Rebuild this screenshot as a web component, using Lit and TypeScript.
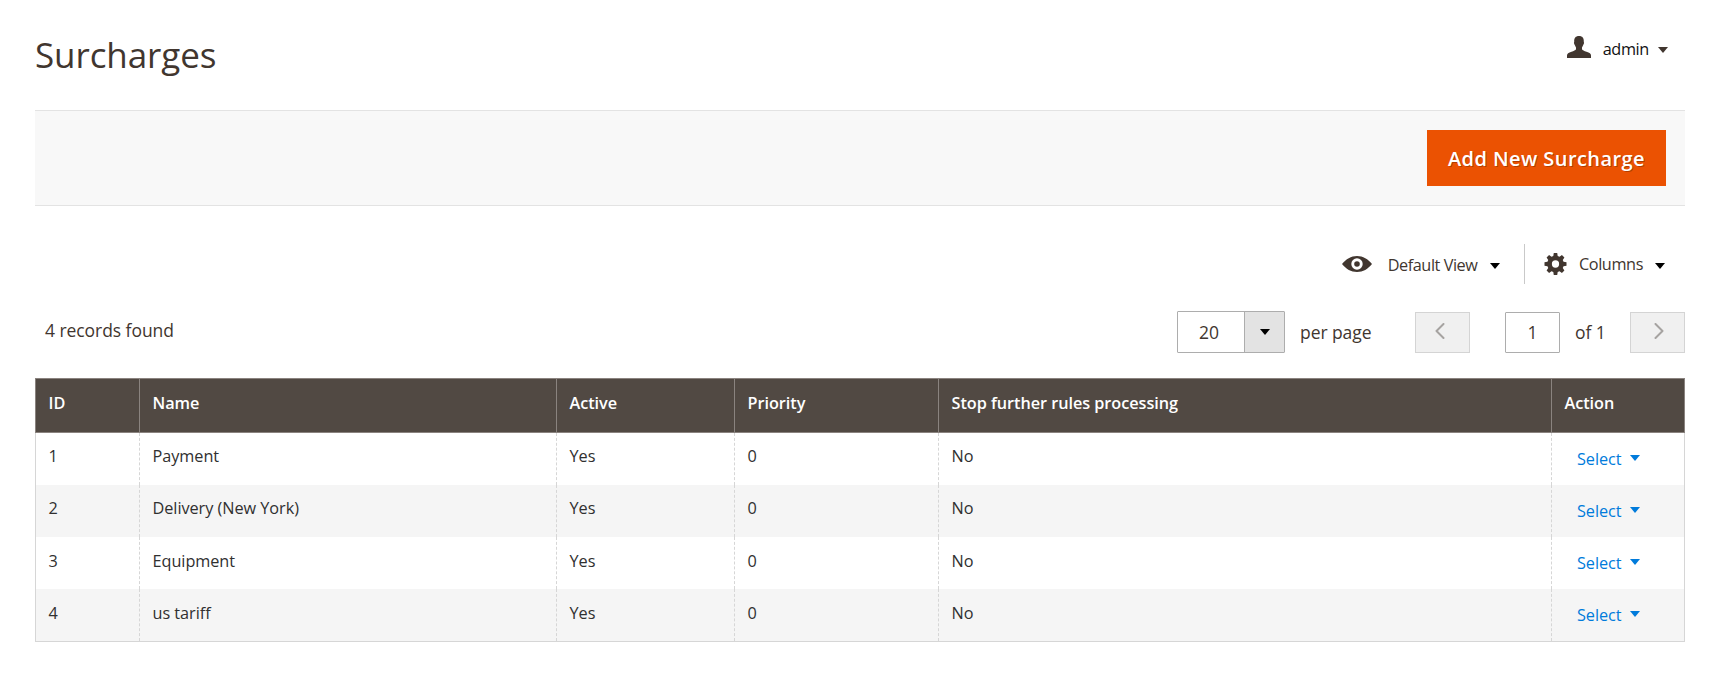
import { LitElement, html, css, svg } from "lit";
import { customElement, property, state } from "lit/decorators.js";

interface Surcharge {
  id: number;
  name: string;
  active: string;
  priority: number;
  stop: string;
}

const userIcon = svg`<path d="M12 0C8.6 0 7 2.200 7.200 5.400C7.300 6.100 6.900 6.100 7 7C7.100 8.100 7.600 8.500 7.900 9.300C8.200 10.300 8.800 11 9 11.600V13.200C8.500 14.300 6.800 14.900 4.500 15.700C1.500 16.700 0 17.300 0 19.500V22H24V19.500C24 17.300 22.500 16.700 19.500 15.700C17.200 14.900 15.500 14.300 15 13.200V11.600C15.200 11 15.800 10.300 16.100 9.300C16.400 8.500 16.900 8.100 17 7C17.100 6.100 16.700 6.100 16.800 5.400C17 2.200 15.400 0 12 0Z"/>`;
const eyeIcon = svg`<path fill-rule="evenodd" d="M0 8C4 3 9 0 15 0S26 3 30 8C26 13 21 16 15 16S4 13 0 8ZM15 2.300A5.700 5.700 0 1 0 15 13.700A5.700 5.700 0 1 0 15 2.300ZM15 5.200A2.800 2.800 0 1 1 15 10.800A2.800 2.800 0 1 1 15 5.200Z"/>`;
const gearIcon = svg`<path fill-rule="evenodd" d="M9.700 0H13.300L13.800 3.100L15.700 3.900L18.200 2.100L20.800 4.700L19.100 7.200L19.900 9.100L23 9.700V13.300L19.900 13.900L19.100 15.800L20.800 18.300L18.200 20.900L15.700 19.100L13.800 19.900L13.300 23H9.700L9.200 19.900L7.300 19.100L4.800 20.900L2.200 18.300L3.900 15.800L3.100 13.900L0 13.300V9.700L3.100 9.100L3.900 7.200L2.200 4.700L4.800 2.100L7.300 3.900L9.200 3.100ZM11.500 7.700A3.800 3.800 0 1 0 11.500 15.300A3.800 3.800 0 1 0 11.500 7.700Z"/>`;

@customElement("caret-down")
class CaretDown extends LitElement {
  static styles = css`
    :host { display: block; width: 10px; height: 6px; flex: none; }
    .shape { display: block; fill: currentColor; }
  `;
  render() {
    return html`<svg class="shape" width="10" height="6" viewBox="0 0 10 6"><path d="M0 0H10L5 6Z" /></svg>`;
  }
}

@customElement("page-header")
class PageHeader extends LitElement {
  @property() heading = "";
  @property() user = "";
  static styles = css`
    :host { display: flex; justify-content: space-between; height: 110px; }
    .title { margin: 31px 0 0; font-size: 35px; font-weight: 400; line-height: 48px; letter-spacing: -0.1px; color: #41362f; }
    .account { display: flex; height: 24px; margin: 36px 17px 0 0; color: #41362f; }
    .icon { display: block; fill: #41362f; margin-right: 11.5px; }
    .name { font-size: 16.25px; line-height: 26px; letter-spacing: -0.35px; color: #111; margin-right: 9px; }
    .caret { margin-top: 11px; }
  `;
  render() {
    return html`
      <h1 class="title">${this.heading}</h1>
      <div class="account">
        <svg class="icon" width="24" height="22" viewBox="0 0 24 22">${userIcon}</svg>
        <span class="name">${this.user}</span>
        <caret-down class="caret"></caret-down>
      </div>
    `;
  }
}

@customElement("grid-toolbar")
class GridToolbar extends LitElement {
  @property({ type: Number }) total = 0;
  static styles = css`
    :host { display: block; }
    .views { display: flex; justify-content: flex-end; height: 40px; padding: 38px 20px 0 0; color: #41362f; font-size: 16.25px; }
    .view { display: flex; height: 40px; padding-right: 24px; border-right: 1px solid #c9c9c9; }
    .columns { display: flex; padding-left: 19px; }
    .icon { display: block; fill: #41362f; }
    .eye { margin: 12px 16px 0 0; }
    .gear { margin: 9px 12px 0 0; }
    .label { line-height: 42px; letter-spacing: -0.45px; }
    .view .caret { margin-left: 12.6px; }
    .columns .label { line-height: 40px; letter-spacing: -0.4px; }
    .caret { margin: 19px 0 0 12px; color: #000; }
    .pager { display: flex; justify-content: space-between; height: 94px; font-size: 17.5px; color: #41362f; letter-spacing: -0.06px; }
    .found { line-height: 24px; margin: 34px 0 0 10px; font-size: 17.5px; }
    .controls { display: flex; padding-top: 27px; line-height: 42px; }
    .select { box-sizing: border-box; display: flex; width: 108px; height: 42px; border: 1px solid #adadad; border-radius: 1px; background: #fff; }
    .value { flex: 1; line-height: 40px; text-align: center; padding-right: 4px; }
    .drop { box-sizing: border-box; width: 40px; padding-left: 1px; border-left: 1px solid #adadad; background: #e3e3e3; display: flex; justify-content: center; align-items: center; color: #000; }
    .per { margin: 0 43.5px 0 15px; }
    .step, .current { box-sizing: border-box; width: 55px; height: 41px; margin-top: 1px; display: flex; justify-content: center; }
    .step { background: #f0f0f0; border: 1px solid #d4d4d4; }
    .chev { fill: none; stroke: #a6a3a1; stroke-width: 2; stroke-linecap: round; stroke-linejoin: round; display: block; margin-top: 10px; }
    .prev { margin-right: 5px; }
    .next { margin-left: 3px; }
    .current { border: 1px solid #adadad; border-radius: 1px; background: #fff; margin-left: 35px; line-height: 38px; }
    .of { width: 70px; box-sizing: border-box; padding-left: 15px; }
  `;
  render() {
    return html`
      <div class="views">
        <div class="view">
          <svg class="icon eye" width="30" height="16" viewBox="0 0 30 16">${eyeIcon}</svg>
          <span class="label">Default View</span>
          <caret-down class="caret"></caret-down>
        </div>
        <div class="columns">
          <svg class="icon gear" width="23" height="22" viewBox="0 0 23 23">${gearIcon}</svg>
          <span class="label">Columns</span>
          <caret-down class="caret"></caret-down>
        </div>
      </div>
      <div class="pager">
        <div class="found">${this.total} records found</div>
        <div class="controls">
          <div class="select">
            <span class="value">20</span>
            <span class="drop"><caret-down></caret-down></span>
          </div>
          <span class="per">per page</span>
          <div class="step"><svg class="chev prev" width="10" height="16" viewBox="0 0 10 16"><path d="M8.500 1L1.500 8L8.500 15" /></svg></div>
          <div class="current">1</div>
          <span class="of">of 1</span>
          <div class="step"><svg class="chev next" width="10" height="16" viewBox="0 0 10 16"><path d="M1.500 1L8.500 8L1.500 15" /></svg></div>
        </div>
      </div>
    `;
  }
}

@customElement("surcharge-table")
class SurchargeTable extends LitElement {
  @property({ attribute: false }) rows: Surcharge[] = [];
  static styles = css`
    :host { display: block; font-size: 16.25px; letter-spacing: -0.04px; line-height: 22px; color: #303030; }
    .row { display: grid; grid-template-columns: 104px 417px 178px 204px 613px 134px; height: 52px; }
    .header { height: 55px; }
    .head { box-sizing: border-box; padding: 13px 12px 0 12.5px; border: solid #8a837f; border-width: 1px 0 1px 1px; background: #514943; color: #fff; font-weight: 600; }
    .head:last-child { border-right-width: 1px; }
    .cell { box-sizing: border-box; padding: 12px 12px 0 12.5px; border-left: 1px dashed #d6d6d6; }
    .cell:first-child { border-left-style: solid; }
    .cell:last-child { border-right: 1px solid #d6d6d6; }
    .row:nth-child(odd) .cell { background: #f5f5f5; }
    .row:nth-child(n + 4) .cell:not(:last-child) { padding-top: 13px; }
    .row:last-child { border-bottom: 1px solid #d6d6d6; }
    .select { display: flex; margin: 3px 0 0 12.5px; color: #007bdb; }
    .caret { margin: 7px 0 0 8px; }
  `;
  render() {
    return html`
      <div class="table" role="table">
        <div class="row header" role="row">
          ${["ID", "Name", "Active", "Priority", "Stop further rules processing", "Action"].map(
            (h) => html`<div class="head" role="columnheader">${h}</div>`
          )}
        </div>
        ${this.rows.map(
          (r) => html`<div class="row" role="row">
            <div class="cell" role="cell">${r.id}</div>
            <div class="cell" role="cell">${r.name}</div>
            <div class="cell" role="cell">${r.active}</div>
            <div class="cell" role="cell">${r.priority}</div>
            <div class="cell" role="cell">${r.stop}</div>
            <div class="cell" role="cell"><span class="select">Select<caret-down class="caret"></caret-down></span></div>
          </div>`
        )}
      </div>
    `;
  }
}

@customElement("app-root")
class AppRoot extends LitElement {
  @state() private rows: Surcharge[] = [
    { id: 1, name: "Payment", active: "Yes", priority: 0, stop: "No" },
    { id: 2, name: "Delivery (New York)", active: "Yes", priority: 0, stop: "No" },
    { id: 3, name: "Equipment", active: "Yes", priority: 0, stop: "No" },
    { id: 4, name: "us tariff", active: "Yes", priority: 0, stop: "No" },
  ];
  static styles = css`
    :host { display: block; box-sizing: border-box; height: 682px; padding: 0 38px 0 35px; background: #fff; font-family: "Open Sans", "Noto Sans", sans-serif; overflow: hidden; }
    .actions { box-sizing: border-box; height: 96px; display: flex; justify-content: flex-end; padding: 19px 19px 0 0; background: #f8f8f8; border: solid #e3e3e3; border-width: 1px 0; }
    .add { box-sizing: border-box; width: 239px; height: 56px; padding: 1px 0 0; border: 0; background: #eb5202; color: #fff; font: 600 20px/55px "Open Sans", sans-serif; letter-spacing: 0.43px; text-shadow: 1px 1px 0 rgba(0, 0, 0, 0.25); }
  `;
  render() {
    return html`
      <page-header heading="Surcharges" user="admin"></page-header>
      <div class="actions"><button class="add">Add New Surcharge</button></div>
      <grid-toolbar .total=${this.rows.length}></grid-toolbar>
      <surcharge-table .rows=${this.rows}></surcharge-table>
    `;
  }
}
